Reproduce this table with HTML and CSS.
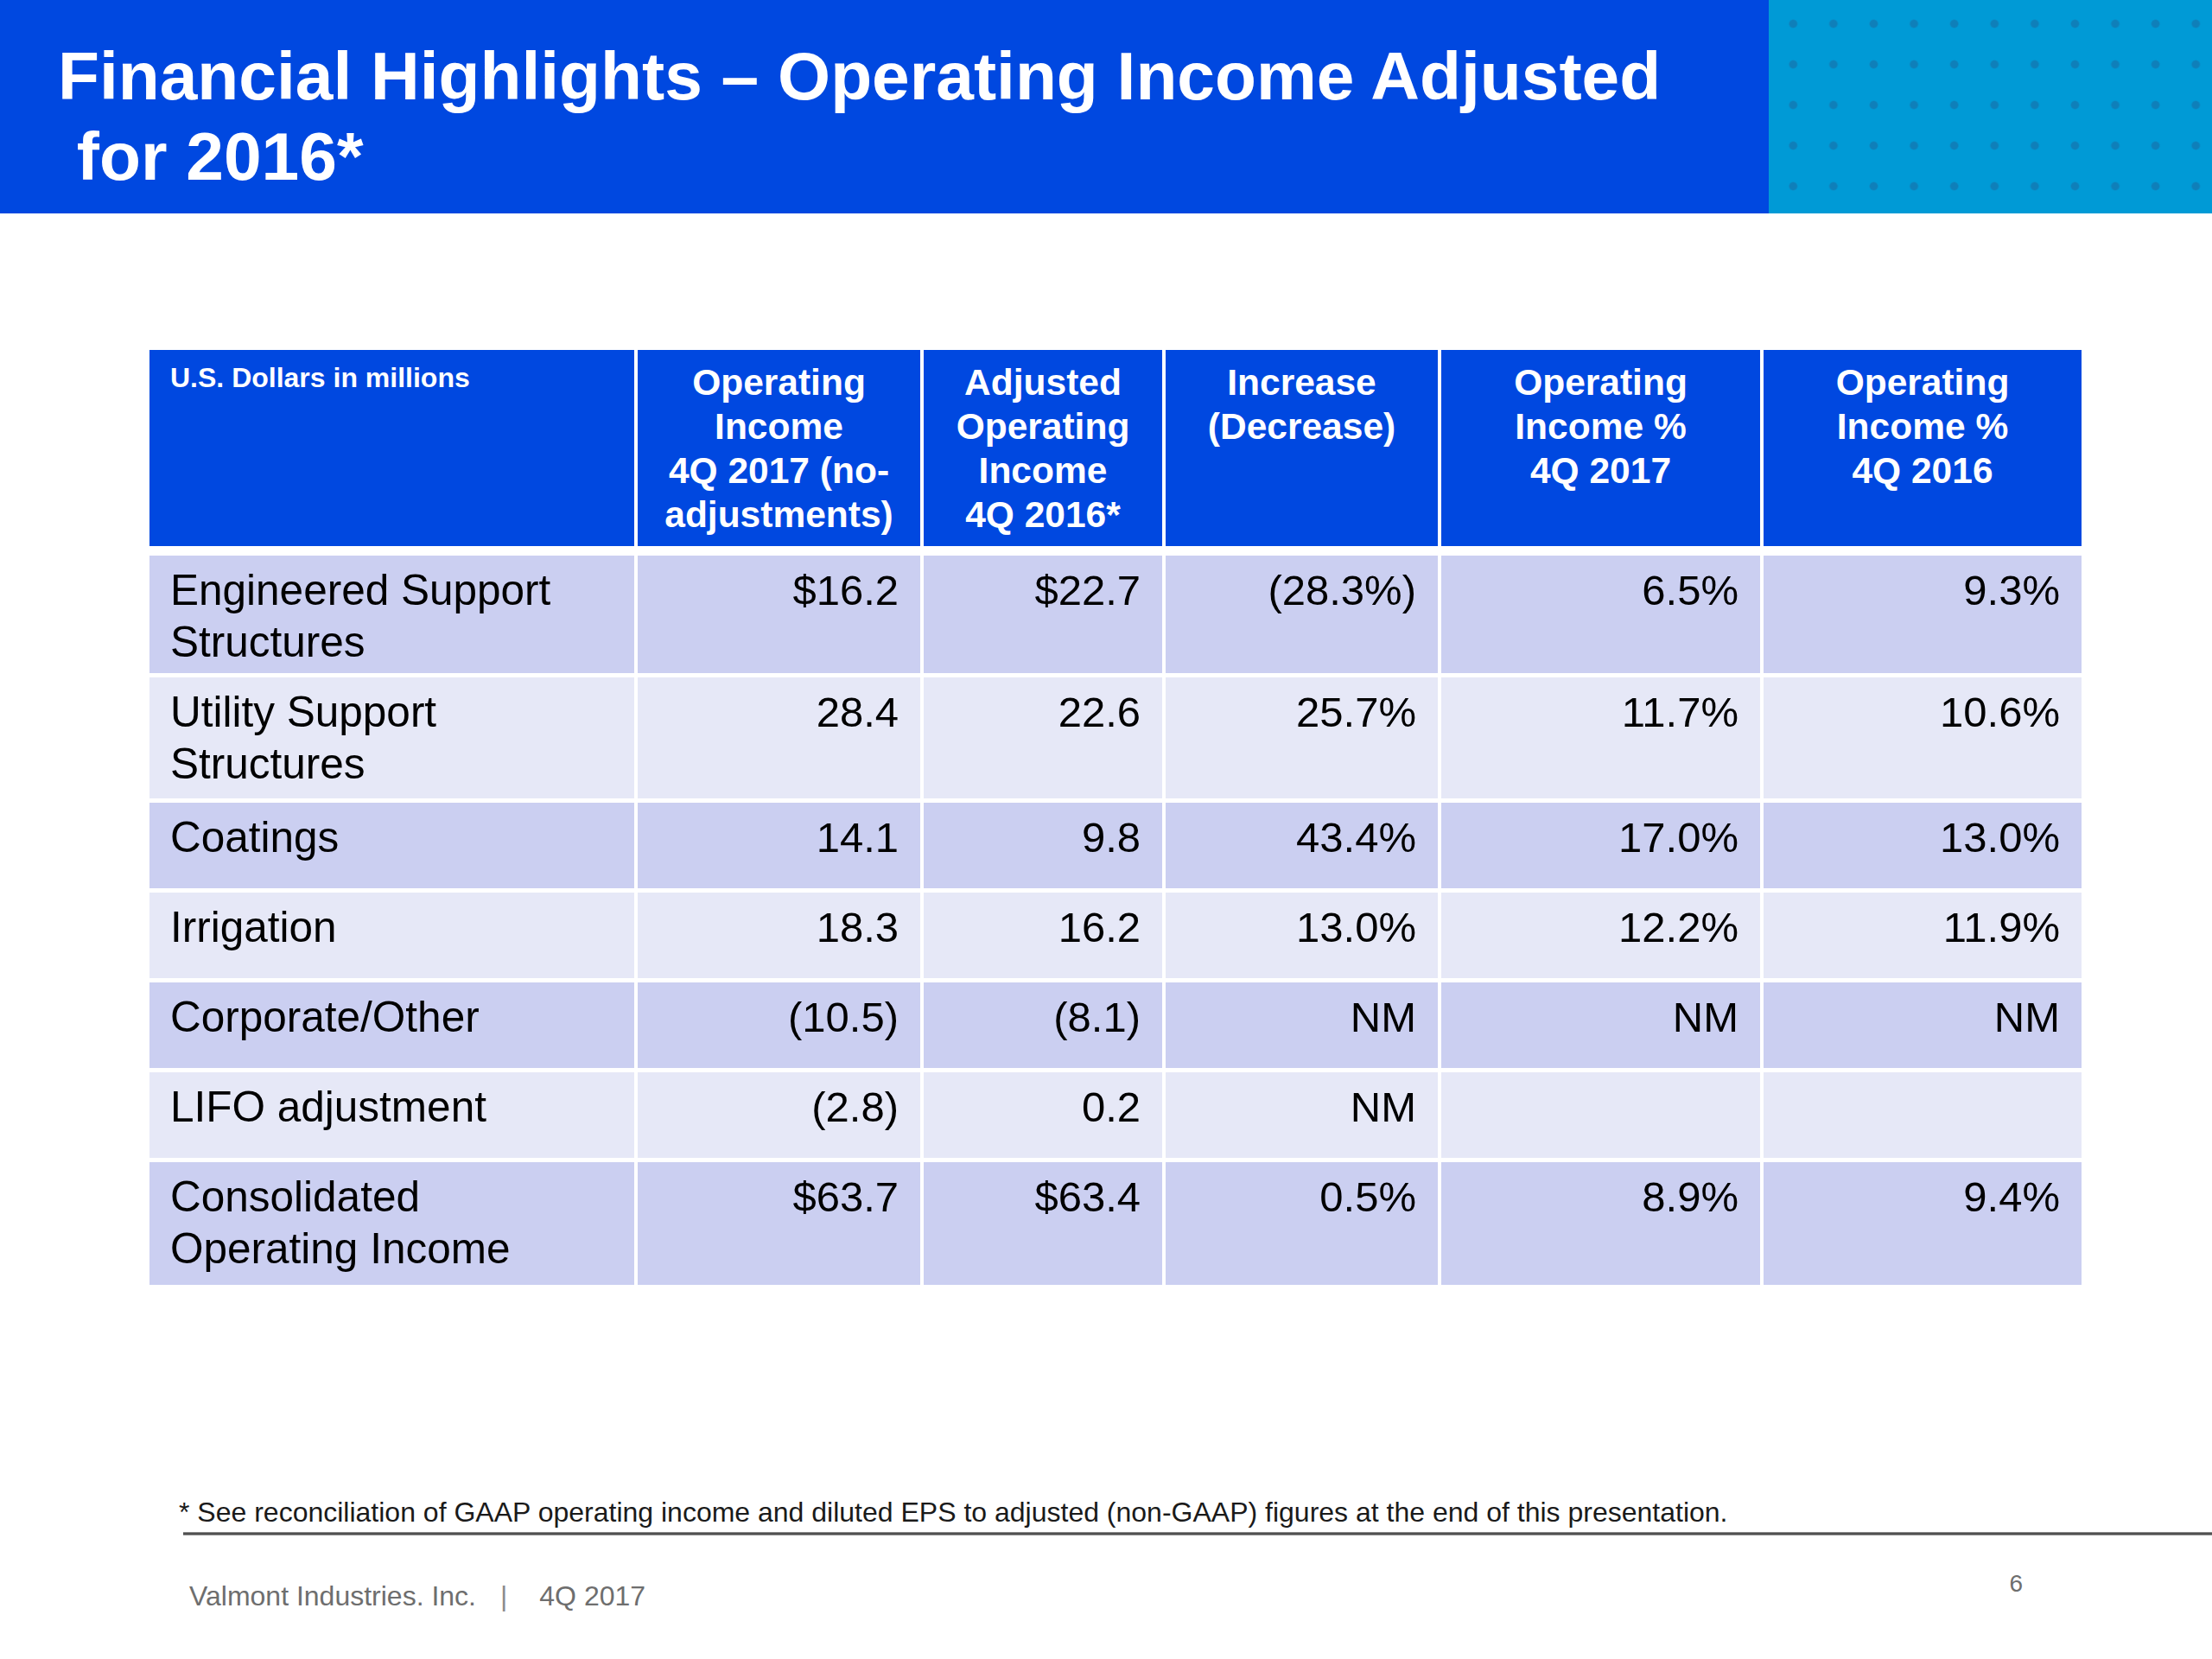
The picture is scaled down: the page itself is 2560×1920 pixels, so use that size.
FILE: index.html
```html
<!DOCTYPE html>
<html lang="en">
<head>
<meta charset="utf-8">
<title>Financial Highlights – Operating Income Adjusted for 2016*</title>
<link rel="stylesheet" href="styles.css">
</head>
<body>
<header class="banner">
  <div class="banner-title">
    <h1>Financial Highlights – Operating Income Adjusted<br>&nbsp;for 2016*</h1>
  </div>
  <div class="banner-deco"></div>
</header>

<main class="content">
  <table class="fin">
    <colgroup>
      <col class="c-label">
      <col class="c-oi">
      <col class="c-adj">
      <col class="c-inc">
      <col class="c-p17">
      <col class="c-p16">
    </colgroup>
    <thead>
      <tr>
        <th class="units">U.S. Dollars in millions</th>
        <th>Operating<br>Income<br>4Q 2017 (no-<br>adjustments)</th>
        <th>Adjusted<br>Operating<br>Income<br>4Q 2016*</th>
        <th>Increase<br>(Decrease)</th>
        <th>Operating<br>Income %<br>4Q 2017</th>
        <th>Operating<br>Income %<br>4Q 2016</th>
      </tr>
    </thead>
    <tbody>
      <tr class="odd r-first">
        <td class="label">Engineered Support<br>Structures</td>
        <td>$16.2</td><td>$22.7</td><td>(28.3%)</td><td>6.5%</td><td>9.3%</td>
      </tr>
      <tr class="even r-two">
        <td class="label">Utility Support<br>Structures</td>
        <td>28.4</td><td>22.6</td><td>25.7%</td><td>11.7%</td><td>10.6%</td>
      </tr>
      <tr class="odd">
        <td class="label">Coatings</td>
        <td>14.1</td><td>9.8</td><td>43.4%</td><td>17.0%</td><td>13.0%</td>
      </tr>
      <tr class="even">
        <td class="label">Irrigation</td>
        <td>18.3</td><td>16.2</td><td>13.0%</td><td>12.2%</td><td>11.9%</td>
      </tr>
      <tr class="odd">
        <td class="label">Corporate/Other</td>
        <td>(10.5)</td><td>(8.1)</td><td>NM</td><td>NM</td><td>NM</td>
      </tr>
      <tr class="even">
        <td class="label">LIFO adjustment</td>
        <td>(2.8)</td><td>0.2</td><td>NM</td><td></td><td></td>
      </tr>
      <tr class="odd r-last">
        <td class="label">Consolidated<br>Operating Income</td>
        <td>$63.7</td><td>$63.4</td><td>0.5%</td><td>8.9%</td><td>9.4%</td>
      </tr>
    </tbody>
  </table>

  <p class="footnote">* See reconciliation of GAAP operating income and diluted EPS to adjusted (non-GAAP) figures at the end of this presentation.</p>
  <div class="rule"></div>
</main>

<footer class="page-footer">
  <div class="footer-left">
    <span>Valmont Industries. Inc.</span><span class="sep">|</span><span>4Q 2017</span>
  </div>
  <div class="page-num">6</div>
</footer>
</body>
</html>
```

FILE: styles.css
```css
* {
  box-sizing: border-box;
}

html, body {
  margin: 0;
  padding: 0;
}

body {
  width: 2560px;
  height: 1920px;
  overflow: hidden;
  background: #ffffff;
  font-family: "Liberation Sans", Arial, Helvetica, sans-serif;
  color: #000;
}

/* ---------- Banner ---------- */
.banner {
  display: flex;
  height: 247px;
}

.banner-title {
  flex: 0 0 2047px;
  background: #0048e0;
  color: #ffffff;
  padding: 42px 0 0 67px;
}

.banner-title h1 {
  margin: 0;
  font-size: 78.5px;
  line-height: 93px;
  font-weight: 700;
  white-space: nowrap;
}

.banner-deco {
  flex: 1 1 auto;
  background-color: #009ad6;
  background-image: radial-gradient(circle at center, #0f7fb9 0, #0f7fb9 4px, rgba(15, 127, 185, 0) 5.5px);
  background-size: 46.6px 47px;
  background-position: 5px 4px;
}

/* ---------- Table ---------- */
.content {
  padding: 158px 0 0 0;
}

.fin {
  margin-left: 173px;
  width: 2236px;
  table-layout: fixed;
  border-collapse: separate;
  border-spacing: 0;
}

.c-label { width: 561px; }
.c-oi    { width: 331px; }
.c-adj   { width: 280px; }
.c-inc   { width: 319px; }
.c-p17   { width: 373px; }
.c-p16   { width: 372px; }

.fin th {
  background: #0048e0;
  color: #ffffff;
  font-weight: 700;
  font-size: 42.5px;
  line-height: 51px;
  text-align: center;
  vertical-align: top;
  padding: 12px 4px 11px;
  height: 227px;
}

.fin th.units {
  text-align: left;
  font-size: 32px;
  line-height: 40px;
  padding-left: 24px;
}

.fin th + th,
.fin td + td {
  border-left: 4px solid #ffffff;
}

.fin td {
  font-size: 49px;
  line-height: 61px;
  text-align: right;
  vertical-align: top;
  padding: 10px 25px 0 24px;
  border-top: 5px solid #ffffff;
  height: 104px;
  white-space: nowrap;
}

.fin td.label {
  text-align: left;
  font-size: 49.5px;
  line-height: 60px;
}

.fin tr.r-first td {
  border-top-width: 11px;
  height: 147px;
}

.fin tr.r-two td {
  height: 145px;
}

.fin tr.r-last td {
  height: 147px;
}

.odd td {
  background: #cbcff1;
}

.even td {
  background: #e6e8f7;
}

/* ---------- Footnote ---------- */
.footnote {
  margin: 245px 0 0 207px;
  font-size: 32px;
  line-height: 36px;
  color: #1a1a1a;
  white-space: nowrap;
}

.rule {
  margin: 5px 0 0 212px;
  height: 4px;
  background: #505050;
  border-top: 1px solid #8a8a8a;
  border-bottom: 1px solid #8a8a8a;
}

/* ---------- Footer ---------- */
.page-footer {
  display: flex;
  justify-content: space-between;
  align-items: flex-start;
  margin-top: 38px;
  padding: 0 219px;
}

.footer-left {
  margin-top: 14px;
  font-size: 32px;
  line-height: 36px;
  color: #6e6e6e;
  white-space: nowrap;
}

.sep {
  margin: 0 37px 0 28px;
  color: #8c8c8c;
}

.page-num {
  font-size: 28px;
  line-height: 36px;
  color: #6e6e6e;
}
```
